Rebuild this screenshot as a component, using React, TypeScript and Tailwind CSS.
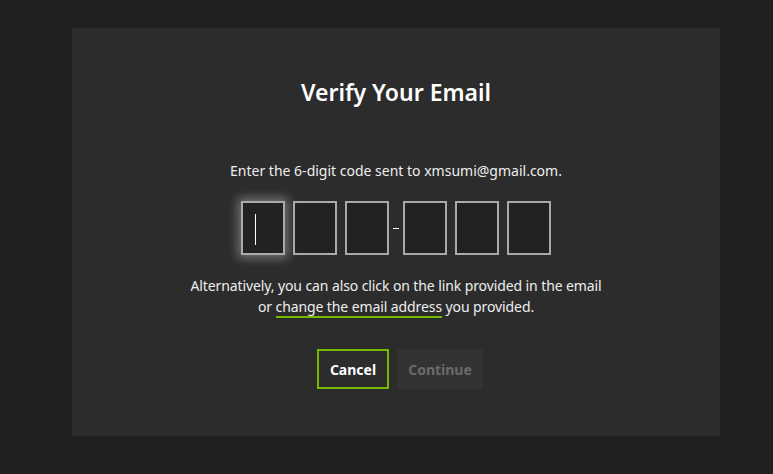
import React from "react";

const App = () => {
  const digits = ["", "", "", "", "", ""];

  return (
    <div className="min-h-[474px] w-full bg-[#202020] pt-[28px] font-['Noto_Sans',sans-serif]">
      <div className="ml-[72px] flex h-[408px] w-[648px] flex-col items-center bg-[#2c2c2c] pt-[49px]">
        <h1 className="text-[23px] font-semibold leading-[30px] text-white">
          Verify Your Email
        </h1>

        <p className="mt-[54px] text-[14px] leading-[20px] text-[#eeeeee]">
          Enter the 6-digit code sent to xmsumi@gmail.com.
        </p>

        <div className="mt-[20px] flex items-center">
          {digits.map((d, i) => (
            <React.Fragment key={i}>
              {i === 3 && (
                <span className="mx-[4px] block h-[1px] w-[6px] bg-white" />
              )}
              <div
                className={
                  "relative flex h-[54px] w-[44px] items-center justify-center border-2 border-[#a9a9ad] bg-[#222222]" +
                  (i === 0 ? " shadow-[0_0_10px_3px_rgba(255,255,255,0.35)]" : "") +
                  (i === 2 || i === 5 ? "" : " mr-[8px]")
                }
              >
                {i === 0 && (
                  <span className="absolute left-[12px] top-[11px] h-[31px] w-[1px] bg-white" />
                )}
                {d}
              </div>
            </React.Fragment>
          ))}
        </div>

        <p className="mt-[20px] text-center text-[14px] leading-[21px] tracking-[-0.1px] text-[#eeeeee]">
          Alternatively, you can also click on the link provided in the email
          <br />
          or{" "}
          <a className="border-b-2 border-[#76b900] text-[#eeeeee]">
            change the email address
          </a>{" "}
          you provided.
        </p>

        <div className="mt-[32px] flex gap-[8px] pl-[8px]">
          <button className="h-[40px] w-[72px] border-2 border-[#76b900] text-[14px] font-bold text-white">
            Cancel
          </button>
          <button className="h-[40px] w-[86px] bg-[#333333] text-[14px] font-bold text-[#6a6a6a]">
            Continue
          </button>
        </div>
      </div>
    </div>
  );
};

export default App;
